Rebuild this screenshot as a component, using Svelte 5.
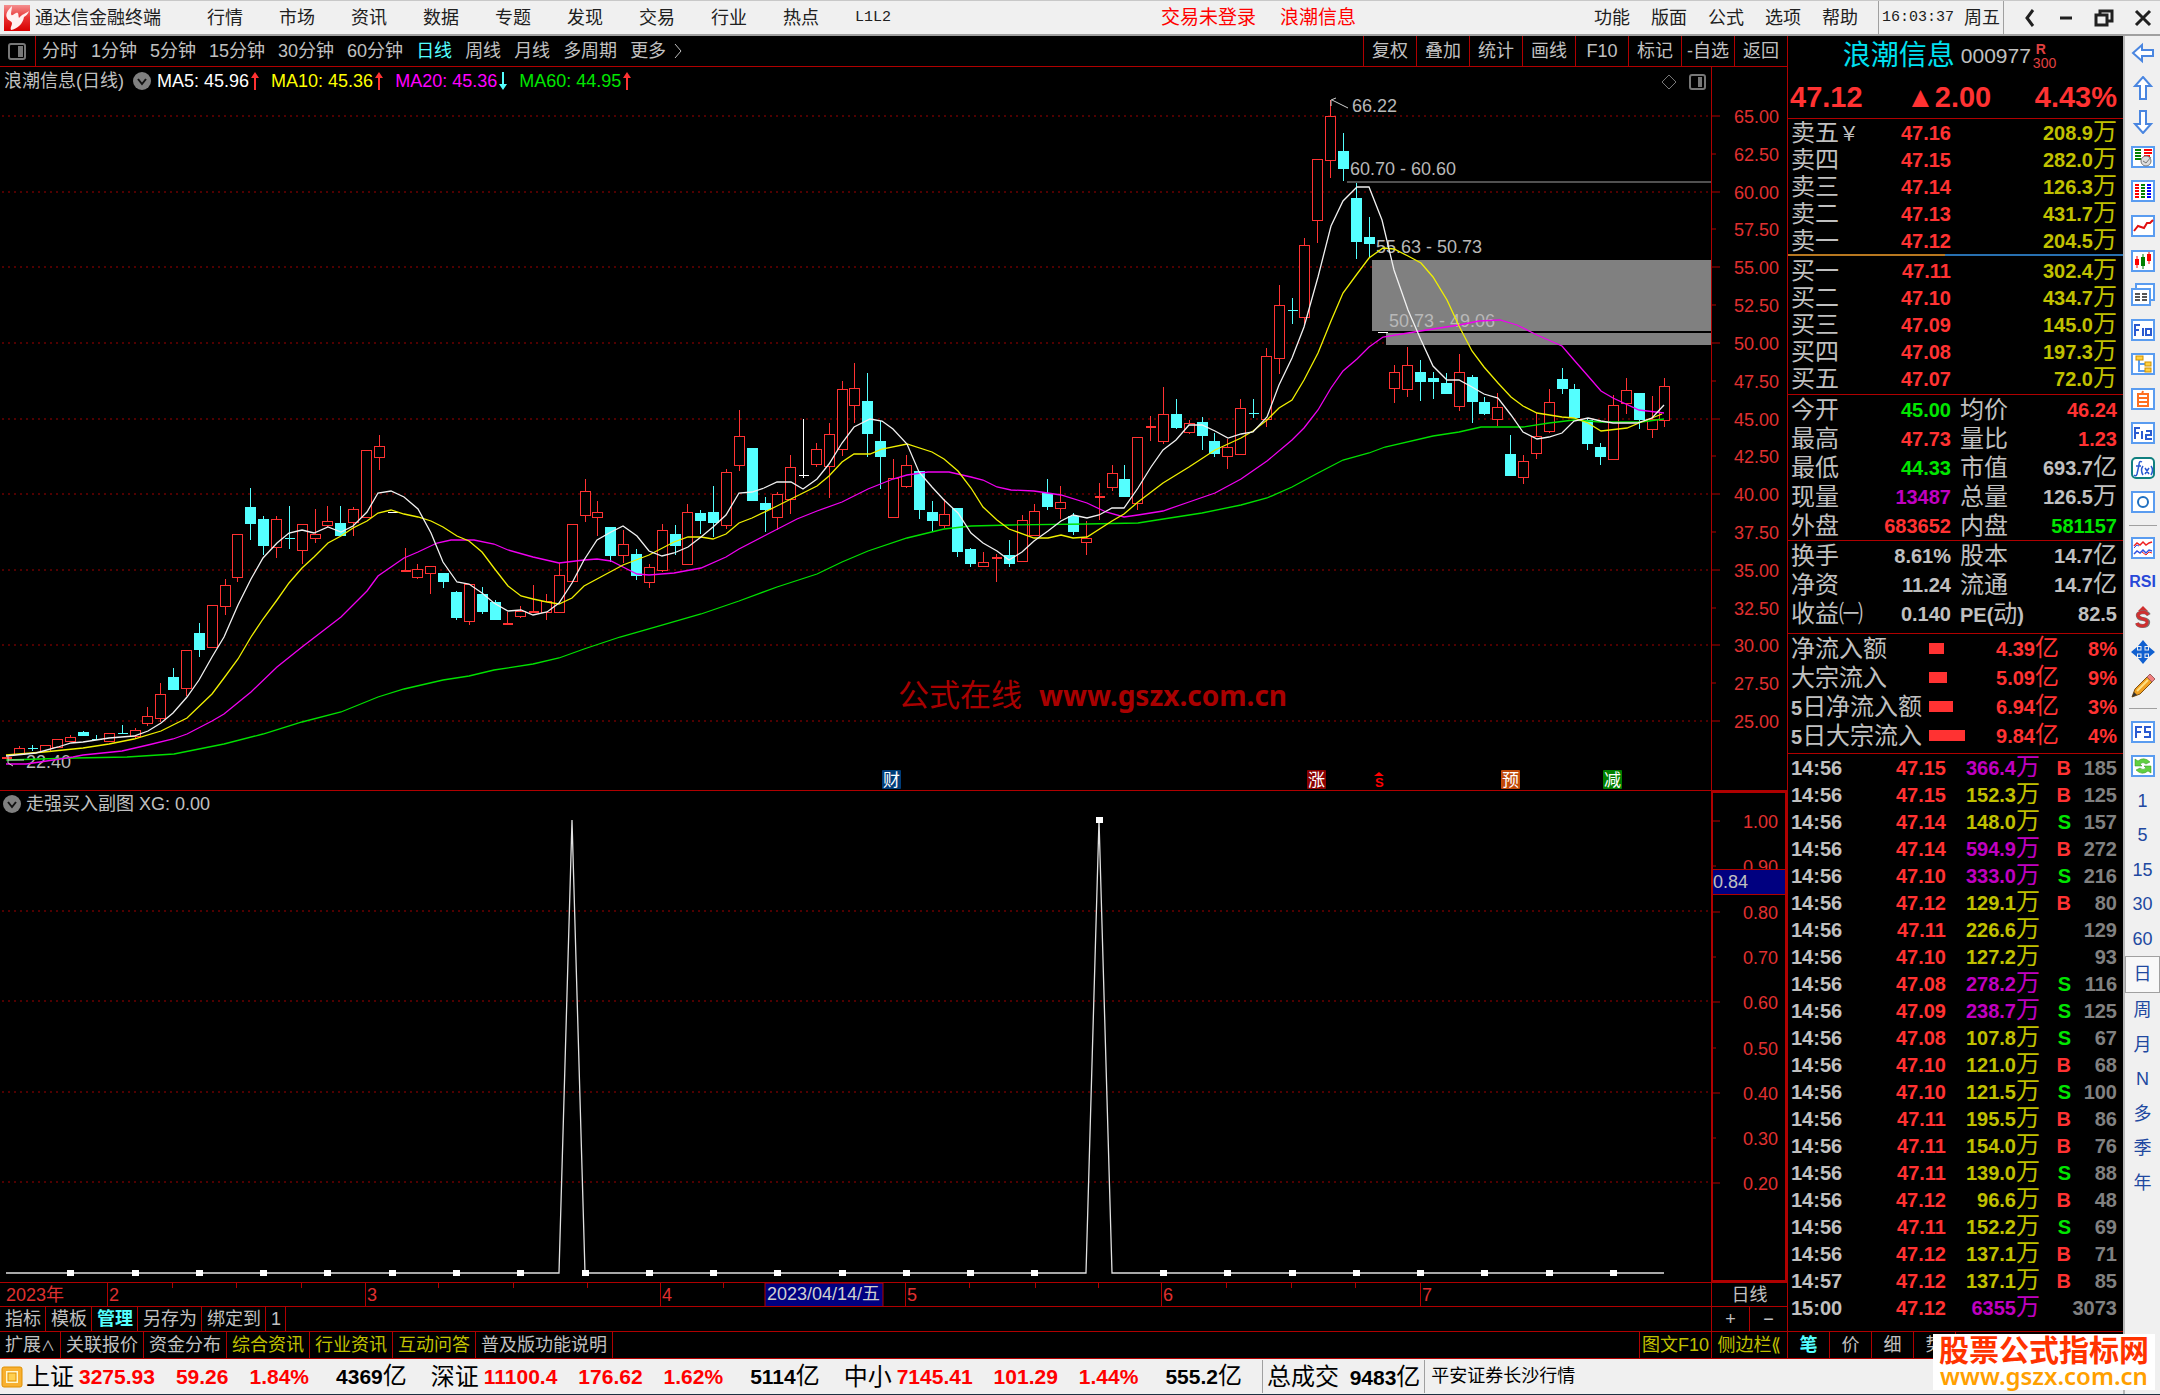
<script lang="ts">
    const menus = ["行情", "市场", "资讯", "数据", "专题", "发现", "交易", "行业", "热点"];
    const sysMenus = ["功能", "版面", "公式", "选项", "帮助"];
    const periods = ["分时", "1分钟", "5分钟", "15分钟", "30分钟", "60分钟", "日线", "周线", "月线", "多周期", "更多"];
    const chartActions = ["复权", "叠加", "统计", "画线", "F10", "标记", "-自选", "返回"];
    let period = $state("日线");

    // [high, body top, body bottom, low, kind]: u = up, d = down, w = unchanged
    type Candle = [number, number, number, number, string];
    const candles: Candle[] = [
        [690, 690, 690, 690, "u"], [679, 681, 687, 687, "u"], [678, 681, 681, 684, "d"], [678, 678, 684, 684, "u"],
        [672, 672, 680, 680, "u"], [668, 670, 674, 674, "u"], [664, 665, 669, 669, "d"], [668, 672, 672, 673, "d"],
        [666, 666, 674, 674, "u"], [658, 666, 666, 666, "d"], [661, 663, 669, 672, "u"], [640, 649, 656, 659, "u"],
        [616, 627, 651, 655, "u"], [601, 610, 623, 623, "d"], [583, 583, 621, 629, "u"], [556, 566, 583, 590, "d"],
        [538, 538, 580, 580, "u"], [512, 518, 539, 548, "u"], [467, 467, 510, 515, "u"], [421, 440, 457, 473, "d"],
        [449, 452, 479, 488, "d"], [449, 452, 480, 491, "u"], [439, 471, 471, 482, "d"], [457, 457, 483, 497, "u"],
        [442, 467, 471, 476, "u"], [439, 454, 458, 460, "u"], [439, 456, 469, 469, "d"], [440, 442, 455, 469, "u"],
        [383, 383, 450, 450, "u"], [368, 379, 390, 403, "u"], [445, 445, 445, 445, "w"], [481, 503, 503, 503, "u"],
        [497, 502, 510, 512, "u"], [499, 499, 506, 527, "u"], [506, 506, 515, 521, "d"], [524, 525, 551, 553, "d"],
        [517, 517, 554, 558, "u"], [520, 527, 545, 547, "d"], [533, 535, 553, 553, "d"], [545, 556, 556, 556, "u"],
        [539, 544, 549, 551, "u"], [518, 544, 544, 544, "u"], [527, 534, 545, 553, "u"], [496, 508, 545, 545, "u"],
        [457, 457, 514, 514, "u"], [412, 424, 448, 455, "u"], [434, 445, 450, 469, "u"], [460, 460, 489, 495, "d"],
        [463, 477, 488, 496, "u"], [482, 487, 509, 513, "d"], [497, 500, 515, 521, "u"], [457, 463, 503, 505, "u"],
        [458, 467, 479, 488, "d"], [437, 445, 497, 497, "u"], [443, 446, 454, 467, "d"], [419, 445, 456, 470, "d"],
        [402, 405, 458, 462, "u"], [343, 369, 398, 404, "u"], [381, 381, 434, 434, "d"], [430, 436, 443, 465, "d"],
        [425, 427, 450, 463, "u"], [388, 400, 432, 447, "u"], [352, 408, 408, 411, "w"], [376, 382, 397, 400, "u"],
        [356, 367, 399, 431, "u"], [314, 322, 382, 389, "u"], [296, 321, 338, 356, "u"], [306, 334, 367, 390, "d"],
        [354, 374, 390, 422, "d"], [392, 411, 450, 450, "u"], [388, 398, 419, 421, "u"], [404, 404, 443, 452, "d"],
        [434, 445, 454, 465, "d"], [432, 447, 458, 461, "u"], [441, 441, 485, 490, "d"], [481, 482, 497, 500, "d"],
        [485, 495, 499, 500, "u"], [487, 490, 490, 515, "u"], [473, 488, 497, 500, "d"], [448, 453, 494, 494, "u"],
        [437, 444, 468, 468, "u"], [412, 426, 440, 443, "d"], [419, 435, 441, 452, "u"], [446, 449, 465, 468, "d"],
        [454, 471, 475, 488, "u"], [416, 429, 429, 453, "u"], [398, 406, 420, 424, "u"], [398, 412, 430, 430, "d"],
        [370, 370, 436, 443, "u"], [349, 359, 359, 374, "u"], [320, 347, 374, 377, "u"], [332, 347, 361, 362, "d"],
        [353, 356, 365, 367, "u"], [350, 355, 369, 383, "d"], [366, 374, 387, 390, "d"], [372, 380, 389, 402, "u"],
        [332, 341, 387, 387, "u"], [332, 346, 346, 351, "d"], [281, 289, 352, 360, "u"], [218, 238, 291, 307, "u"],
        [231, 243, 243, 257, "d"], [171, 178, 250, 257, "u"], [92, 92, 153, 176, "u"], [33, 49, 93, 111, "u"],
        [66, 84, 102, 114, "d"], [116, 131, 175, 192, "d"], [150, 170, 177, 190, "d"], [265, 265, 265, 265, "w"],
        [298, 305, 321, 336, "u"], [280, 298, 322, 330, "u"], [293, 305, 315, 334, "d"], [305, 311, 315, 332, "d"],
        [306, 316, 327, 327, "d"], [287, 305, 339, 344, "u"], [308, 310, 335, 356, "d"], [330, 335, 347, 348, "d"],
        [326, 340, 352, 359, "u"], [368, 387, 409, 409, "d"], [388, 394, 410, 417, "u"], [346, 369, 386, 392, "u"],
        [322, 335, 364, 366, "u"], [301, 312, 322, 327, "d"], [317, 322, 351, 351, "d"], [351, 353, 377, 383, "d"],
        [376, 380, 390, 398, "d"], [328, 338, 392, 392, "u"], [311, 323, 336, 347, "u"], [326, 326, 353, 362, "d"],
        [329, 352, 362, 371, "u"], [311, 319, 353, 360, "u"],
    ];
    const barX = (i: number) => Math.round(6 + i * 12.856);
    const candleColor: Record<string, string> = { u: "#ff3232", d: "#54ffff", w: "#ffffff" };

    const averages = [
        {
            name: "MA60",
            color: "#00e000",
            points: "6,693 40,692 75,691 127,690 174,687 224,677 263,667 302,655 341,645 378,630 404,622 443,613 469,609 494,603 533,597 559,591 584,582 620,570 662,558 701,547 739,534 777,520 817,507 842,495 868,484 907,471 944,462 971,459 1011,458 1087,457 1138,456 1157,453 1202,446 1241,438 1267,431 1292,420 1318,406 1343,393 1369,386 1385,380 1433,369 1459,365 1481,360 1523,360 1549,356 1574,353 1601,355 1641,355 1664,352",
        },
        {
            name: "MA20",
            color: "#f000f0",
            points: "6,697 26,697 40,695 73,690 83,688 122,684 148,678 173,672 187,667 212,654 224,647 251,625 277,600 302,580 328,560 341,550 367,524 378,509 404,491 418,485 437,476 451,473 474,473 494,477 508,483 533,490 559,496 584,493 597,492 611,494 623,500 637,507 649,508 674,506 701,501 726,490 739,482 764,469 797,452 817,444 842,435 868,422 893,412 907,408 928,405 949,405 971,410 983,413 997,420 1011,423 1034,424 1061,428 1087,436 1106,445 1124,450 1138,448 1163,444 1189,435 1215,426 1241,412 1267,394 1292,373 1304,361 1318,343 1331,321 1343,304 1357,292 1369,280 1383,270 1408,266 1433,262 1459,258 1479,254 1500,253 1517,258 1537,268 1562,279 1574,293 1588,309 1601,324 1613,331 1639,343 1664,346",
        },
        {
            name: "MA10",
            color: "#f0f000",
            points: "6,688 44,685 83,681 109,677 134,672 161,664 187,651 212,627 224,611 238,592 251,570 263,552 277,533 289,516 302,501 314,490 328,476 341,469 353,461 367,454 378,446 391,443 404,447 418,450 431,454 443,460 457,469 469,474 482,485 494,501 508,519 521,529 533,532 547,535 559,537 572,531 584,519 597,512 623,498 649,488 674,475 688,470 701,470 713,472 726,467 739,456 752,451 777,439 803,426 817,419 829,409 842,395 854,387 870,387 882,382 907,377 932,385 944,392 958,404 971,421 983,440 997,453 1009,462 1034,471 1048,471 1061,468 1073,471 1087,470 1112,454 1124,447 1138,435 1163,416 1189,400 1215,383 1241,371 1253,364 1267,353 1279,341 1292,333 1304,313 1318,286 1331,254 1343,226 1357,207 1369,191 1383,181 1394,182 1408,189 1421,196 1433,210 1447,233 1459,259 1472,284 1484,300 1498,316 1511,330 1523,339 1537,346 1562,350 1574,351 1588,356 1601,364 1627,361 1639,356 1652,351 1662,347",
        },
        {
            name: "MA5",
            color: "#f0f0f0",
            points: "6,689 36,686 58,680 71,676 83,675 109,671 134,669 148,664 161,656 173,646 187,630 199,613 212,590 224,570 238,538 251,512 263,491 277,476 289,466 302,463 314,466 328,460 341,465 353,459 367,445 378,426 391,424 404,430 418,442 431,466 443,495 457,515 469,517 482,526 494,536 508,544 521,543 533,548 547,545 559,536 572,516 584,493 597,473 611,465 623,459 637,469 649,484 662,489 674,486 688,480 701,470 713,460 726,448 739,426 752,425 764,421 777,415 791,415 803,422 817,412 829,397 842,376 854,360 870,352 882,354 893,362 907,377 919,405 932,420 944,433 958,446 971,466 983,476 997,484 1009,493 1022,485 1034,474 1048,464 1061,454 1073,448 1087,451 1099,448 1112,441 1124,441 1138,421 1151,400 1163,383 1176,373 1189,358 1202,358 1215,364 1228,371 1241,367 1253,365 1267,350 1279,318 1292,291 1304,260 1318,210 1331,159 1343,134 1357,120 1369,120 1382,153 1394,203 1408,243 1421,273 1433,299 1447,313 1459,313 1472,320 1484,327 1498,331 1511,348 1523,365 1537,372 1549,370 1562,366 1574,354 1588,351 1601,354 1613,356 1637,356 1652,351 1664,338",
        },
    ];
    const legend = [
        { text: "MA5: 45.96", cls: "white", up: true },
        { text: "MA10: 45.36", cls: "bright-yellow", up: true },
        { text: "MA20: 45.36", cls: "bright-magenta", up: false },
        { text: "MA60: 44.95", cls: "green", up: true },
    ];

    const prices = Array.from({ length: 17 }, (_, i) => 65 - i * 2.5);
    const priceY = (p: number) => Math.round(49 + (65 - p) * 15.125);
    const events = [
        { x: 882, text: "财", color: "#003c78" },
        { x: 1307, text: "涨", color: "#8b0000" },
        { x: 1501, text: "预", color: "#c04808" },
        { x: 1603, text: "减", color: "#008000" },
    ];

    // sub chart: the signal is 1 on two bars and 0 elsewhere
    const signals = [44, 85];
    const levels = [1, 0.9, 0.8, 0.7, 0.6, 0.5, 0.4, 0.3, 0.2];
    const levelY = (v: number) => Math.round(29 + (1 - v) * 453);
    const signalPoints = candles.map((_, i) => `${barX(i)},${levelY(signals.includes(i) ? 1 : 0)}`).join(" ");
    const marks = Array.from({ length: 25 }, (_, k) => (k + 1) * 5);

    const months = [
        { x: 107, text: "2" },
        { x: 365, text: "3" },
        { x: 660, text: "4" },
        { x: 905, text: "5" },
        { x: 1161, text: "6" },
        { x: 1420, text: "7" },
    ];
    const weeks = [172, 236, 301, 438, 513, 587, 723, 969, 1035, 1098, 1226, 1291, 1355];

    const asks = [["卖五", "47.16", "208.9"], ["卖四", "47.15", "282.0"], ["卖三", "47.14", "126.3"], ["卖二", "47.13", "431.7"], ["卖一", "47.12", "204.5"]];
    const bids = [["买一", "47.11", "302.4"], ["买二", "47.10", "434.7"], ["买三", "47.09", "145.0"], ["买四", "47.08", "197.3"], ["买五", "47.07", "72.0"]];

    // label, value, colour, label, value, unit, colour
    const quotes = [
        ["今开", "45.00", "green", "均价", "46.24", "", "red"],
        ["最高", "47.73", "red", "量比", "1.23", "", "red"],
        ["最低", "44.33", "green", "市值", "693.7", "亿", "gray"],
        ["现量", "13487", "magenta", "总量", "126.5", "万", "gray"],
        ["外盘", "683652", "red", "内盘", "581157", "", "green"],
    ];
    const finance = [
        ["换手", "8.61%", "gray", "股本", "14.7", "亿", "gray"],
        ["净资", "11.24", "gray", "流通", "14.7", "亿", "gray"],
        ["收益㈠", "0.140", "gray", "PE(动)", "82.5", "", "gray"],
    ];
    const flows = [
        { day: "", name: "净流入额", bar: 15, value: "4.39", pct: "8%" },
        { day: "", name: "大宗流入", bar: 18, value: "5.09", pct: "9%" },
        { day: "5", name: "日净流入额", bar: 24, value: "6.94", pct: "3%" },
        { day: "5", name: "日大宗流入", bar: 36, value: "9.84", pct: "4%" },
    ];
    const ticks = [
        ["14:56", "47.15", "366.4", "B", "185"],
        ["14:56", "47.15", "152.3", "B", "125"],
        ["14:56", "47.14", "148.0", "S", "157"],
        ["14:56", "47.14", "594.9", "B", "272"],
        ["14:56", "47.10", "333.0", "S", "216"],
        ["14:56", "47.12", "129.1", "B", "80"],
        ["14:56", "47.11", "226.6", "", "129"],
        ["14:56", "47.10", "127.2", "", "93"],
        ["14:56", "47.08", "278.2", "S", "116"],
        ["14:56", "47.09", "238.7", "S", "125"],
        ["14:56", "47.08", "107.8", "S", "67"],
        ["14:56", "47.10", "121.0", "B", "68"],
        ["14:56", "47.10", "121.5", "S", "100"],
        ["14:56", "47.11", "195.5", "B", "86"],
        ["14:56", "47.11", "154.0", "B", "76"],
        ["14:56", "47.11", "139.0", "S", "88"],
        ["14:56", "47.12", "96.6", "B", "48"],
        ["14:56", "47.11", "152.2", "S", "69"],
        ["14:56", "47.12", "137.1", "B", "71"],
        ["14:57", "47.12", "137.1", "B", "85"],
        ["15:00", "47.12", "6355", "", "3073"],
    ];
    // big trades are drawn in magenta
    const isBig = (v: string) => Number(v) > 230;

    const indexes = [
        { name: "上证", value: "3275.93", diff: "59.26", pct: "1.84%", amount: "4369" },
        { name: "深证", value: "11100.4", diff: "176.62", pct: "1.62%", amount: "5114" },
        { name: "中小", value: "7145.41", diff: "101.29", pct: "1.44%", amount: "555.2" },
    ];

    const frame = '<rect x="1" y="2" width="22" height="20" fill="#fff" stroke="#5a9cf0" stroke-width="2"/>';
    const tools = [
        { label: "后退", icon: '<path d="M2 12L11 4V9H22V15H11V20Z" fill="#fff" stroke="#4a86e0" stroke-width="2"/>' },
        { label: "上移", icon: '<path d="M12 1L20 10H15V23H9V10H4Z" fill="#fff" stroke="#4a86e0" stroke-width="2"/>' },
        { label: "下移", icon: '<path d="M12 23L20 14H15V1H9V14H4Z" fill="#fff" stroke="#4a86e0" stroke-width="2"/>' },
        { label: "报价", icon: frame + '<path d="M4 5H10M4 8H10M4 11H10M4 14H10" stroke="#008000" stroke-width="2"/><path d="M13 5H21M13 8H21M13 11H19" stroke="#f00" stroke-width="2"/><circle cx="15" cy="16" r="5" fill="#ddd" stroke="#777"/><path d="M12 16L15 18L20 12" fill="none" stroke="#777"/>' },
        { label: "列表", icon: frame + '<path d="M4 6H8M4 9H8M4 12H8M4 15H8M4 18H8" stroke="#f00" stroke-width="2"/><path d="M10 6H14M10 9H14M10 12H14M10 15H14M10 18H14" stroke="#008000" stroke-width="2"/><path d="M16 6H20M16 9H20M16 12H20M16 15H20M16 18H20" stroke="#00f" stroke-width="2"/>' },
        { label: "分时图", icon: frame + '<path d="M3 17L7 12L10 13L13 14L16 9H19L22 6" fill="none" stroke="#e01010" stroke-width="2"/>' },
        { label: "K线图", icon: frame + '<path d="M6 7V19M18 3V15" stroke="#f00" stroke-width="1"/><path d="M12 5V20" stroke="#008000" stroke-width="1"/><rect x="4" y="10" width="4" height="6" fill="#f00"/><rect x="10" y="8" width="4" height="9" fill="#008000"/><rect x="16" y="5" width="4" height="7" fill="#f00"/>' },
        { label: "资料", icon: '<rect x="5" y="1" width="18" height="16" fill="#fff" stroke="#5a9cf0" stroke-width="2"/><rect x="1" y="6" width="18" height="16" fill="#fff" stroke="#5a9cf0" stroke-width="2"/><path d="M4 11H9M11 11H16M4 14H9M11 14H16M4 17H9M11 17H16" stroke="#555" stroke-width="2"/>' },
        { label: "F10", icon: frame + '<path d="M4 18V7H9M4 12H8M12 10V18M15 11H20V17H15Z" fill="none" stroke="#2a5ad0" stroke-width="2"/>' },
        { label: "板块", icon: frame + '<path d="M8 8V19H14M8 12H14" fill="none" stroke="#5a9cf0" stroke-width="2"/><rect x="5" y="4" width="7" height="4" fill="#ffd040" stroke="#d09000"/><rect x="14" y="10" width="6" height="4" fill="#ffd040" stroke="#d09000"/><rect x="14" y="16" width="6" height="4" fill="#ffd040" stroke="#d09000"/>' },
        { label: "自选", icon: frame + '<path d="M12 4L11 7M7 7H17V19H7ZM7 11H17M7 15H17" fill="none" stroke="#ff7020" stroke-width="2"/>' },
        { label: "F12", icon: frame + '<path d="M4 18V7H9M4 12H8M11 10V18M15 10H20V14H15V18H21" fill="none" stroke="#2a5ad0" stroke-width="2"/>' },
        { label: "公式", icon: '<rect x="1" y="2" width="22" height="20" rx="4" fill="#fff" stroke="#108080" stroke-width="2"/><path d="M11 6Q8 4 8 9L6 18Q5 21 3 19M5 10H10M12 10Q9 14 12 19M14 12L18 18M18 12L14 18M20 10Q23 14 20 19" fill="none" stroke="#2a5ad0" stroke-width="1.5"/>' },
        { label: "选股", icon: frame + '<circle cx="12" cy="12" r="5" fill="none" stroke="#2070c0" stroke-width="2"/>' },
        { sep: true },
        { label: "指标", icon: frame + '<path d="M3 10L6 7L9 9L12 6L15 9L18 7L21 6" fill="none" stroke="#f02020" stroke-width="1.5"/><path d="M3 12L6 9L8 10" fill="none" stroke="#3050e0" stroke-width="1"/><path d="M3 18L6 15L9 17L12 14L15 17L18 14L21 15" fill="none" stroke="#3050e0" stroke-width="1.5"/><path d="M11 16L15 19L18 16L21 17" fill="none" stroke="#f02020" stroke-width="1"/>' },
        { text: "RSI", bold: true },
        { label: "资金", icon: '<path d="M12 1L17 6H7Z" fill="#d03030"/><path d="M18 10Q16 7 12 7Q6 8 7 11Q8 14 12 14Q18 15 17 18Q16 21 12 21Q7 21 6 18" fill="none" stroke="#777" stroke-width="4"/><path d="M17 10Q15 7 12 7Q6 8 7 11Q8 13 12 14Q17 15 16 18Q15 21 11 21Q7 21 6 18" fill="none" stroke="#d03030" stroke-width="3"/>' },
        { label: "移动", icon: '<path d="M12 0L17 6H7ZM12 24L17 18H7ZM0 12L6 7V17ZM24 12L18 7V17Z" fill="#1060d0"/><rect x="7" y="7" width="10" height="10" fill="#1060d0"/><path d="M12 6V18M6 12H18" stroke="#f0f0f0" stroke-width="5"/><path d="M12 5V19M5 12H19" stroke="#1060d0" stroke-width="3"/>' },
        { label: "画笔", icon: '<path d="M1 23L4 15L16 3L21 8L9 20Z" fill="#f0a020" stroke="#805010"/><path d="M6 17L17 6" stroke="#ffe080" stroke-width="2"/><path d="M16 3L19 0L24 5L21 8Z" fill="#f08080" stroke="#a06060"/><path d="M1 23L3 18L6 21Z" fill="#333"/>' },
        { sep: true },
        { label: "F5", icon: frame + '<path d="M5 18V7H11M5 12H10M20 7H14V12H19V17H13" fill="none" stroke="#2a5ad0" stroke-width="2"/>' },
        { label: "刷新", icon: frame + '<path d="M4 5V12H11L9 10Q12 7 15 10L19 8Q13 2 7 7Z" fill="#60d040" stroke="#309020" stroke-width="0.5"/><path d="M20 19V12H13L15 14Q12 17 9 14L5 16Q11 22 17 17Z" fill="#60d040" stroke="#309020" stroke-width="0.5"/>' },
        ...["1", "5", "15", "30", "60", "日", "周", "月", "N", "多", "季", "年"].map((text) => ({ text })),
    ] as { label?: string; icon?: string; text?: string; sep?: boolean; bold?: boolean }[];
</script>

<div class="app">
    <header class="menubar">
        <svg class="logo" width="26" height="26" viewBox="0 0 26 26" aria-hidden="true">
            <defs>
                <linearGradient id="logo-bg" x2="0" y2="1">
                    <stop offset="0" stop-color="#f49090" />
                    <stop offset="0.5" stop-color="#e83030" />
                    <stop offset="1" stop-color="#d80000" />
                </linearGradient>
            </defs>
            <rect width="26" height="26" fill="url(#logo-bg)" />
            <path d="M8 1C4 5 1 9 3 13C4 16 7 15 8 18C8 21 6 22 7 25C13 24 19 19 20 12C22 11 24 9 25 6C21 9 18 9 15 13C14 10 15 7 12 8C9 9 8 12 7 9C7 6 8 4 8 1Z" fill="#fff0f0" />
        </svg>
        <strong class="title">通达信金融终端</strong>
        <nav class="menus">
            {#each menus as m}
                <button>{m}</button>
            {/each}
            <button class="mono">L1L2</button>
        </nav>
        <div class="notice">
            <span>交易未登录</span>
            <span>浪潮信息</span>
        </div>
        <nav class="menus sys">
            {#each sysMenus as m}
                <button>{m}</button>
            {/each}
        </nav>
        <div class="clock"><span class="mono">16:03:37</span><span>周五</span></div>
        <div class="window-buttons">
            <button aria-label="收起"><svg width="16" height="20" viewBox="0 0 16 20"><path d="M11 2L5 10L11 18" /></svg></button>
            <button aria-label="最小化"><svg width="16" height="20" viewBox="0 0 16 20"><path d="M2 10H14" /></svg></button>
            <button aria-label="还原"><svg width="20" height="20" viewBox="0 0 20 20"><path d="M2 7H13V17H2ZM6 7V3H18V13H13" /></svg></button>
            <button aria-label="关闭"><svg width="18" height="20" viewBox="0 0 18 20"><path d="M2 3L16 17M16 3L2 17" /></svg></button>
        </div>
    </header>

    <div class="body">
        <div class="workspace">
            <div class="panels">
                <main class="charts">
                    <div class="toolbar">
                        <button class="pane-toggle" aria-label="侧栏">
                            <svg width="18" height="17" viewBox="0 0 18 17"><rect x="1" y="1" width="16" height="15" rx="2" fill="none" stroke="#777" stroke-width="2" /><rect x="10" y="3" width="5" height="11" fill="#777" /></svg>
                        </button>
                        <div class="periods">
                            {#each periods as p}
                                <button class:active={p === period} onclick={() => (period = p)}>{p}</button>
                            {/each}
                            <svg class="more" width="8" height="16" viewBox="0 0 8 16"><path d="M1 1L7 8L1 15" fill="none" stroke="#c0c0c0" /></svg>
                        </div>
                        <div class="actions">
                            {#each chartActions as a}
                                <button>{a}</button>
                            {/each}
                        </div>
                    </div>

                    <section class="chart price-chart">
                        <div class="plot">
                            <svg class="canvas">
                                {#each prices.filter((p) => p % 5 === 0) as p}
                                    <line class="grid" x1="2" x2="100%" y1={priceY(p)} y2={priceY(p)} />
                                {/each}
                                <line x1="1347" x2="100%" y1="115" y2="115" stroke="#a0a0a0" />
                                <svg x="1372" y="193" width="339" height="71"><rect width="100%" height="100%" fill="#808080" /></svg>
                                <svg x="1386" y="266" width="325" height="12"><rect width="100%" height="100%" fill="#808080" /></svg>
                                <g class="note">
                                    <text x="1352" y="45">66.22</text>
                                    <text x="1350" y="108">60.70 - 60.60</text>
                                    <text x="1376" y="186">55.63 - 50.73</text>
                                    <text x="1389" y="260">50.73 - 49.06</text>
                                    <text x="26" y="701">22.40</text>
                                </g>
                                <g shape-rendering="crispEdges">
                                    {#each candles as [high, top, bottom, low, kind], i}
                                        {@const x = barX(i)}
                                        {@const color = candleColor[kind]}
                                        <rect {x} y={high} width="1" height={low - high} fill={color} />
                                        {#if top === bottom}
                                            <rect x={x - 4} y={top} width="10" height={kind === "u" ? 2 : 1} fill={color} />
                                        {:else if kind === "u"}
                                            <rect x={x - 4.5} y={top + 0.5} width="10" height={bottom - top} fill="#000" stroke={color} />
                                        {:else}
                                            <rect x={x - 5} y={top} width="11" height={bottom - top} fill={color} />
                                        {/if}
                                    {/each}
                                </g>
                                {#each averages as ma (ma.name)}
                                    <polyline points={ma.points} fill="none" stroke={ma.color} stroke-width="1.3" />
                                {/each}
                                <path d="M1331 39V33L1336 31M1332 33L1348 41M24 693H8M8 688V696L13 699" fill="none" stroke="#d0d0d0" />
                                <text class="site" x="898" y="639"><tspan class="site-name">公式在线</tspan><tspan class="site-url" x="1039">www.gszx.com.cn</tspan></text>
                                {#each events as e}
                                    <rect x={e.x} y="703" width="19" height="19" rx="1" fill={e.color} />
                                    <text class="event" x={e.x + 1} y="719">{e.text}</text>
                                {/each}
                                <path d="M1379 705L1384 709H1374Z" fill="#f00" />
                                <text class="dollar" x="1375" y="720">S</text>
                            </svg>
                            <div class="legend">
                                <span>浪潮信息(日线)</span>
                                <svg class="badge" width="18" height="18" viewBox="0 0 18 18"><circle cx="9" cy="9" r="9" fill="#808080" /><path d="M5 7L9 12L13 7" fill="none" stroke="#111" stroke-width="2" /></svg>
                                {#each legend as l}
                                    <span class={l.cls}>{l.text}</span>
                                    <svg class="arrow" width="8" height="18" viewBox="0 0 8 18">
                                        {#if l.up}
                                            <path d="M4 0L8 6H5V18H3V6H0Z" fill="#ff3232" />
                                        {:else}
                                            <path d="M4 18L8 12H5V0H3V12H0Z" fill="#54ffff" />
                                        {/if}
                                    </svg>
                                {/each}
                            </div>
                            <svg class="corner" width="48" height="18" viewBox="0 0 48 18"><path d="M10 2L17 9L10 16L3 9Z" fill="none" stroke="#777" /><rect x="31" y="2" width="15" height="14" rx="2" fill="none" stroke="#777" stroke-width="2" /><rect x="39" y="4" width="4" height="10" fill="#777" /></svg>
                        </div>
                        <svg class="axis">
                            {#each prices as p}
                                <line x1="0" x2={p % 5 ? 4 : 8} y1={priceY(p)} y2={priceY(p)} stroke="#b00000" />
                                <text x="67" y={priceY(p) + 7}>{p.toFixed(2)}</text>
                            {/each}
                        </svg>
                    </section>

                    <section class="chart signal-chart">
                        <div class="plot">
                            <svg class="canvas">
                                {#each [0.8, 0.6, 0.4, 0.2] as v}
                                    <line class="grid" x1="2" x2="100%" y1={levelY(v)} y2={levelY(v)} />
                                {/each}
                                <polyline points={signalPoints} fill="none" stroke="#e0e0e0" stroke-width="1.3" />
                                {#each marks as i}
                                    <rect x={barX(i) - 3} y={levelY(signals.includes(i) ? 1 : 0) - 3} width="7" height="6" fill="#fff" />
                                {/each}
                            </svg>
                            <div class="legend sub">
                                <svg class="badge" width="18" height="18" viewBox="0 0 18 18"><circle cx="9" cy="9" r="9" fill="#808080" /><path d="M5 7L9 12L13 7" fill="none" stroke="#111" stroke-width="2" /></svg>
                                <span>走强买入副图 XG: 0.00</span>
                            </div>
                        </div>
                        <div class="axis boxed">
                            <svg class="canvas">
                                {#each levels as v, i}
                                    <line x1="0" x2={i % 2 ? 3 : 7} y1={levelY(v) - 1} y2={levelY(v) - 1} stroke="#b00000" />
                                    <text x="65" y={levelY(v) + 6}>{v.toFixed(2)}</text>
                                {/each}
                            </svg>
                            <span class="cursor-value">0.84</span>
                        </div>
                    </section>

                    <div class="time-row">
                        <svg class="canvas">
                            <text x="6" y="18">2023年</text>
                            {#each months as m}
                                <rect x={m.x} y="0" width="1" height="24" fill="#b00000" />
                                <text x={m.x + 2} y="18">{m.text}</text>
                            {/each}
                            {#each weeks as x}
                                <rect {x} y="0" width="1" height="5" fill="#b00000" />
                            {/each}
                            <rect x="765" y="0" width="118" height="24" fill="#000080" stroke="#b00000" />
                            <text class="cursor-date" x="767" y="17">2023/04/14/五</text>
                        </svg>
                        <span class="side">日线</span>
                    </div>

                    <div class="tabs">
                        {#each ["指标", "模板", "管理", "另存为", "绑定到", "1"] as t}
                            <button class:active={t === "管理"}>{t}</button>
                        {/each}
                        <div class="side zoom">
                            <button>+</button>
                            <button>−</button>
                        </div>
                    </div>
                    <div class="tabs last">
                        <button>扩展<span class="caret">∧</span></button>
                        <button>关联报价</button>
                        <button>资金分布</button>
                        <button class="yellow">综合资讯</button>
                        <button class="yellow">行业资讯</button>
                        <button class="yellow">互动问答</button>
                        <button>普及版功能说明</button>
                        <button class="yellow f10">图文F10</button>
                        <button class="yellow side">侧边栏⟪</button>
                    </div>
                </main>

                <aside class="quote">
                    <div class="head">
                        <h1>浪潮信息</h1>
                        <span class="code">000977</span>
                        <span class="tag"><b>R</b><i>300</i></span>
                    </div>
                    <div class="last-price"><span>47.12</span><span>▲2.00</span><span>4.43%</span></div>

                    <table class="book asks">
                        <tbody>
                            {#each asks as [name, price, vol], i}
                                <tr><th>{name}{#if i === 0}<small>￥</small>{/if}</th><td class="red">{price}</td><td class="yellow">{vol}<em>万</em></td></tr>
                            {/each}
                        </tbody>
                    </table>
                    <div class="ratio"></div>
                    <table class="book bids">
                        <tbody>
                            {#each bids as [name, price, vol]}
                                <tr><th>{name}</th><td class="red">{price}</td><td class="yellow">{vol}<em>万</em></td></tr>
                            {/each}
                        </tbody>
                    </table>

                    {#each [quotes, finance] as rows}
                        <table class="stats">
                            <tbody>
                                {#each rows as [l1, v1, c1, l2, v2, unit, c2]}
                                    <tr>
                                        <th>{l1}</th><td class={c1}>{v1}</td>
                                        <th>{#if l2.startsWith("PE")}<b>PE(</b>动<b>)</b>{:else}{l2}{/if}</th>
                                        <td class={c2}>{v2}<em>{unit}</em></td>
                                    </tr>
                                {/each}
                            </tbody>
                        </table>
                    {/each}

                    <table class="flows">
                        <tbody>
                            {#each flows as f}
                                <tr>
                                    <th><b>{f.day}</b>{f.name}</th>
                                    <td><div class="bar" style="width: {f.bar}px"></div></td>
                                    <td class="red">{f.value}<em>亿</em></td>
                                    <td class="red">{f.pct}</td>
                                </tr>
                            {/each}
                        </tbody>
                    </table>

                    <div class="tape">
                        <table>
                            <tbody>
                                {#each ticks as [time, price, vol, side, count]}
                                    <tr>
                                        <td class="gray">{time}</td>
                                        <td class="red">{price}</td>
                                        <td class={isBig(vol) ? "magenta" : "yellow"}>{vol}<em>万</em></td>
                                        <td class={side === "B" ? "red" : "green"}>{side}</td>
                                        <td class="dim">{count}</td>
                                    </tr>
                                {/each}
                            </tbody>
                        </table>
                    </div>
                    <div class="tape-tabs">
                        {#each ["笔", "价", "细", "势"] as t}
                            <button class:active={t === "笔"}>{t}</button>
                        {/each}
                    </div>
                </aside>
            </div>

            <footer class="status">
                <svg class="status-icon" width="22" height="22" viewBox="0 0 22 22"><rect x="1" y="1" width="20" height="20" rx="2" fill="#f8b030" stroke="#e09000" /><rect x="5" y="5" width="12" height="12" fill="#fff8d0" /><rect x="7" y="7" width="8" height="8" fill="#ffd050" stroke="#e09000" /></svg>
                {#each indexes as ix}
                    <div class="index">
                        <span class="name">{ix.name}</span>
                        <b>{ix.value}</b>
                        <b>{ix.diff}</b>
                        <b>{ix.pct}</b>
                        <span class="amount"><strong>{ix.amount}</strong>亿</span>
                    </div>
                {/each}
                <div class="total">总成交 <span class="amount"><strong>9483</strong>亿</span></div>
                <div class="server">平安证券长沙行情</div>
            </footer>
        </div>

        <aside class="tools">
            <div class="tool-list">
                {#each tools as tool}
                    {#if tool.sep}
                        <hr />
                    {:else if tool.icon}
                        <button aria-label={tool.label}><svg width="24" height="24" viewBox="0 0 24 24">{@html tool.icon}</svg></button>
                    {:else}
                        <button class:rsi={tool.bold} class:pressed={tool.text === "日"}>{tool.text}</button>
                    {/if}
                {/each}
            </div>
        </aside>
    </div>

    <div class="watermark">
        <strong>股票公式指标网</strong>
        <span>www.gszx.com.cn</span>
    </div>
</div>

<style>
    :global(body) {
        background: #000;
    }

    .app {
        --line: #b00000;
        --chrome: #f0f0f0;
        position: relative;
        display: flex;
        flex-direction: column;
        height: 100vh;
        box-sizing: border-box;
        border-bottom: 1px solid #1c3040;
        background: #000;
        color: #c0c0c0;
        font-family: "Liberation Sans", "Noto Sans CJK SC", sans-serif;
        font-size: 18px;
        line-height: 24px;
        white-space: nowrap;
        overflow: hidden;
    }

    button {
        border: 0;
        padding: 0;
        background: none;
        color: inherit;
        font: inherit;
        cursor: pointer;
    }

    svg {
        display: block;
    }

    .mono {
        font-family: "Liberation Mono", monospace;
        font-size: 15px;
    }

    .white { color: #fff; }
    .bright-yellow { color: #ff0; }
    .bright-magenta { color: #f0f; }
    .red { color: #ff3232; }
    .green { color: #00e600; }
    .yellow { color: #c0c000; }
    .magenta { color: #c000c0; }
    .gray { color: #c0c0c0; }
    .dim { color: #808080; }

    /* menu bar */
    .menubar {
        display: flex;
        flex: none;
        align-items: center;
        height: 36px;
        box-sizing: border-box;
        padding-left: 4px;
        border-top: 1px solid #c8c8c8;
        border-bottom: 2px solid #a0a0a0;
        background: var(--chrome);
        color: #202020;
    }

    .title {
        margin-left: 5px;
        font-weight: 400;
    }

    .menus {
        display: flex;
        gap: 36px;
        margin-left: 46px;
    }

    .notice {
        display: flex;
        gap: 24px;
        margin-left: auto;
        color: #f00;
        font-size: 19px;
    }

    .sys {
        gap: 21px;
        margin-left: 238px;
    }

    .clock {
        display: flex;
        align-items: center;
        gap: 10px;
        height: 33px;
        margin-left: 20px;
        padding: 0 3px;
        border: solid #a0a0a0;
        border-width: 0 1px;
    }

    .window-buttons {
        display: flex;
        gap: 20px;
        margin: 0 8px 0 18px;
    }

    .window-buttons path {
        fill: none;
        stroke: #202020;
        stroke-width: 3;
    }

    .body,
    .panels {
        display: flex;
        flex: 1;
        min-height: 0;
    }

    .workspace,
    .charts {
        display: flex;
        flex: 1;
        flex-direction: column;
        min-width: 0;
    }

    /* period toolbar */
    .toolbar {
        display: flex;
        flex: none;
        height: 31px;
        box-sizing: border-box;
        border-bottom: 1px solid var(--line);
    }

    .pane-toggle {
        width: 36px;
        padding-left: 8px;
        border-right: 1px solid var(--line);
    }

    .periods {
        display: flex;
        align-items: center;
        gap: 13px;
        padding-left: 6px;
    }

    .active {
        color: #54ffff;
    }

    .more {
        margin-left: -5px;
    }

    .actions {
        display: flex;
        margin-left: auto;
    }

    .actions button {
        width: 53px;
        border-left: 1px solid var(--line);
    }

    /* charts */
    .chart {
        display: flex;
        min-height: 0;
        border-bottom: 1px solid var(--line);
    }

    .price-chart {
        flex: 724;
    }

    .signal-chart {
        flex: 491;
    }

    .plot {
        position: relative;
        flex: 1;
        overflow: hidden;
    }

    .canvas {
        width: 100%;
        height: 100%;
    }

    .grid {
        stroke: #a00000;
        stroke-dasharray: 2 4;
    }

    .axis {
        width: 76px;
        height: 100%;
        box-sizing: border-box;
        border-left: 1px solid var(--line);
    }

    .axis text,
    .time-row text {
        fill: #e03030;
    }

    .axis text {
        text-anchor: end;
    }

    .boxed {
        position: relative;
        border: 2px solid var(--line);
    }

    .cursor-value {
        position: absolute;
        top: 76px;
        right: 0;
        left: 0;
        border: solid var(--line);
        border-width: 1px 0;
        background: #000080;
    }

    .note {
        fill: #b8b8b8;
    }

    .site {
        fill: #a80000;
    }

    .site-name {
        font-family: "Noto Sans CJK SC", sans-serif;
        font-size: 31px;
    }

    .site-url {
        font-family: "Noto Sans", sans-serif;
        font-size: 28px;
        font-weight: 700;
    }

    .event {
        fill: #fff;
        font-size: 17px;
    }

    .dollar {
        fill: #f00;
        font-size: 13px;
        font-weight: 700;
    }

    .legend {
        position: absolute;
        top: 2px;
        left: 4px;
        display: flex;
        align-items: center;
    }

    .legend .badge {
        margin: 0 6px 0 9px;
    }

    .legend .arrow {
        margin: 0 12px 0 2px;
    }

    .legend.sub {
        top: 1px;
        left: 3px;
    }

    .sub .badge {
        margin: 0 5px 0 0;
    }

    .corner {
        position: absolute;
        top: 6px;
        right: 4px;
    }

    /* time axis and bottom tabs */
    .time-row {
        display: flex;
        flex: none;
        height: 24px;
        box-sizing: border-box;
        border-bottom: 1px solid var(--line);
    }

    .time-row .canvas {
        flex: 1;
        min-width: 0;
    }

    .time-row .cursor-date {
        fill: #d0d0d0;
    }

    .side {
        width: 76px;
        box-sizing: border-box;
        flex: none;
        border-left: 1px solid var(--line);
        text-align: center;
    }

    .tabs {
        display: flex;
        flex: none;
        height: 25px;
        box-sizing: border-box;
        border-bottom: 1px solid var(--line);
    }

    .tabs.last {
        height: 27px;
    }

    .tabs > button {
        padding: 0 4px 0 5px;
        border-right: 1px solid var(--line);
    }

    .tabs.last > button {
        padding: 0 5px;
    }

    .tabs > .active {
        font-weight: 700;
    }

    .caret {
        font-size: 14px;
    }

    .tabs.last > .f10 {
        margin-left: auto;
        padding: 0 2px;
        border-right: 0;
        border-left: 1px solid var(--line);
    }

    .tabs.last > .side {
        padding: 0;
        border-right: 0;
    }

    .zoom {
        display: flex;
        margin-left: auto;
    }

    .zoom button {
        flex: 1;
    }

    .zoom button + button {
        border-left: 1px solid var(--line);
    }

    /* quote panel */
    .quote {
        display: flex;
        flex-direction: column;
        width: 336px;
        box-sizing: border-box;
        border-left: 1px solid var(--line);
        font-size: 20px;
    }

    .quote > * {
        flex-shrink: 0;
    }

    .head {
        display: flex;
        align-items: center;
        justify-content: center;
        height: 40px;
        padding-right: 12px;
    }

    h1 {
        margin: 0 6px 0 0;
        color: #00e0f0;
        font-size: 28px;
        font-weight: 400;
    }

    .code {
        font-size: 21px;
    }

    .tag {
        display: flex;
        flex-direction: column;
        margin-left: 2px;
        color: #e04040;
        font-size: 14px;
        line-height: 14px;
    }

    .tag b {
        padding-left: 3px;
    }

    .tag i {
        font-style: normal;
    }

    .last-price {
        display: flex;
        align-items: center;
        justify-content: space-between;
        height: 42px;
        padding: 0 6px 0 2px;
        border-bottom: 1px solid var(--line);
        color: #ff3232;
        font-size: 29px;
        font-weight: 700;
    }

    table {
        width: 100%;
        border-collapse: separate;
        border-spacing: 0;
        table-layout: fixed;
    }

    th,
    td {
        height: 29px;
        padding: 0;
        line-height: 26px;
        text-align: right;
        vertical-align: middle;
    }

    th {
        font-size: 24px;
        font-weight: 400;
        text-align: left;
    }

    th b {
        font-size: 20px;
        line-height: 1px;
    }

    td {
        font-weight: 700;
    }

    em {
        font-size: 24px;
        font-style: normal;
        font-weight: 400;
        line-height: 1px;
    }

    small {
        font-size: 20px;
        line-height: 1px;
    }

    .book,
    .stats,
    .flows {
        border: solid transparent;
        border-width: 0 6px 0 3px;
    }

    .book th,
    .book td {
        height: 27px;
    }

    .book th {
        width: 80px;
    }

    .book td:nth-child(2) {
        width: 80px;
    }

    .ratio {
        height: 2px;
        background: linear-gradient(90deg, #b87820 0 47%, #2870b0 47%);
    }

    .bids {
        padding: 1px 0 2px;
    }

    .stats,
    .flows {
        box-shadow: 0 -1px var(--line);
        margin-top: 1px;
    }

    .stats th:first-child {
        width: 80px;
    }

    .stats td:nth-child(2) {
        width: 80px;
    }

    .stats th:nth-child(3) {
        width: 64px;
        padding-left: 9px;
    }

    .stats + .stats {
        padding-bottom: 5px;
    }

    .flows {
        padding-bottom: 3px;
    }

    .flows th {
        width: 138px;
    }

    .flows td:nth-child(2) {
        width: 40px;
    }

    .flows td:nth-child(3) {
        width: 90px;
    }

    .bar {
        height: 11px;
        background: #ff3232;
    }

    .tape {
        flex: 1;
        padding: 0 6px 0 3px;
        border-top: 1px solid var(--line);
    }

    .tape td {
        height: 27px;
    }

    .tape td:first-child {
        width: 60px;
        text-align: left;
    }

    .tape td:nth-child(2) {
        width: 95px;
    }

    .tape td:nth-child(3) {
        width: 94px;
    }

    .tape td:nth-child(4) {
        width: 31px;
    }

    .tape-tabs {
        display: flex;
        height: 28px;
        box-sizing: border-box;
        border: solid var(--line);
        border-width: 1px 0;
        font-size: 18px;
    }

    .tape-tabs button {
        width: 42px;
        border-right: 1px solid var(--line);
    }

    .tape-tabs .active {
        font-weight: 700;
    }

    /* status bar */
    .status {
        display: flex;
        flex: none;
        align-items: center;
        height: 35px;
        padding-left: 1px;
        background: var(--chrome);
        color: #000;
        font-size: 24px;
    }

    .status b {
        color: #f00;
        font-size: 21px;
    }

    .status strong {
        font-size: 21px;
    }

    .status-icon {
        margin-right: 3px;
    }

    .index {
        display: flex;
        align-items: center;
        margin-right: 24px;
    }

    .index b {
        margin-right: 21px;
    }

    .name {
        margin-right: 5px;
    }

    .index .amount {
        margin-left: 6px;
    }

    .total,
    .server {
        height: 33px;
        border-left: 1px solid #a0a0a0;
        line-height: 33px;
        padding: 0 4px;
    }

    .total {
        margin-left: -4px;
    }

    .total .amount {
        margin-left: 4px;
    }

    .server {
        padding-left: 6px;
        font-size: 18px;
    }

    /* right tool strip */
    .tools {
        display: flex;
        flex-direction: column;
        width: 37px;
        box-sizing: border-box;
        border-left: 2px solid #b8b8b8;
        background: var(--chrome);
        color: #2048a0;
    }

    .tools::after {
        flex: 1;
        content: "";
    }

    .tool-list {
        display: flex;
        flex: 6;
        flex-direction: column;
    }

    .tool-list button {
        display: flex;
        flex: 1;
        align-items: center;
        justify-content: center;
        min-height: 0;
    }

    .tool-list .rsi {
        color: #2848d8;
        font-size: 16px;
        font-weight: 700;
    }

    .tool-list .pressed {
        border: 1px solid #a0a0a0;
        background: #f8f8f8;
    }

    hr {
        width: 28px;
        margin: 5px auto;
        border: 0;
        border-top: 1px solid #a0a0a0;
    }

    .watermark {
        position: absolute;
        right: 5px;
        bottom: 4px;
        display: flex;
        flex-direction: column;
        align-items: center;
        width: 222px;
        height: 56px;
        background: #fff;
        color: #ff3300;
    }

    .watermark strong {
        font-size: 30px;
        line-height: 34px;
    }

    .watermark span {
        color: #ffa000;
        font-family: "Noto Sans", sans-serif;
        font-size: 24px;
        font-weight: 600;
        line-height: 16px;
    }
</style>
